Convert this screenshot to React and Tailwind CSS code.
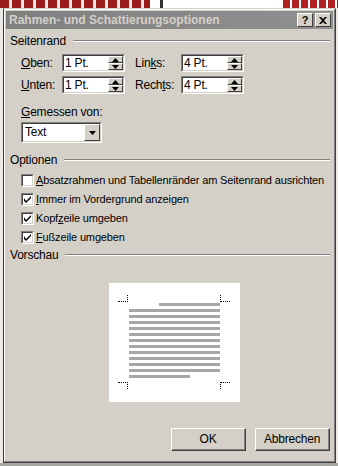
import React from "react";

const font = { fontFamily: '"Liberation Sans", Arial, sans-serif' };

function Spin() {
  return (
    <div className="flex flex-col w-[15px] h-full shrink-0">
      <div className="flex-1 flex items-center justify-center bg-[#d4d0c8] border-t border-l border-t-white border-l-white border-r border-b border-r-[#404040] border-b-[#404040]">
        <svg width="7" height="4" viewBox="0 0 7 4"><path d="M3.5 0 L7 4 L0 4 Z" fill="#000" /></svg>
      </div>
      <div className="flex-1 flex items-center justify-center bg-[#d4d0c8] border-t border-l border-t-white border-l-white border-r border-b border-r-[#404040] border-b-[#404040]">
        <svg width="7" height="4" viewBox="0 0 7 4"><path d="M0 0 L7 0 L3.5 4 Z" fill="#000" /></svg>
      </div>
    </div>
  );
}

function Field({ value }) {
  return (
    <div className="w-[63px] h-[18px] shrink-0 flex bg-white border-t border-l border-t-[#808080] border-l-[#808080] border-r border-b border-r-white border-b-white">
      <div className="flex-1 flex border-t border-l border-t-[#404040] border-l-[#404040] border-r border-b border-r-[#d4d0c8] border-b-[#d4d0c8]">
        <div className="flex-1 pl-[1px] text-[12px] leading-[15px] text-black">{value}</div>
        <Spin />
      </div>
    </div>
  );
}

function Check({ checked }) {
  return (
    <div className="w-[13px] h-[13px] shrink-0 bg-white border-t border-l border-t-[#808080] border-l-[#808080] border-r border-b border-r-white border-b-white">
      <div className="w-full h-full border-t border-l border-t-[#404040] border-l-[#404040] border-r border-b border-r-[#d4d0c8] border-b-[#d4d0c8] flex items-center justify-center">
        {checked && (
          <svg width="7" height="7" viewBox="0 0 7 7">
            <path d="M0 2 L0 5 L2 7 L7 2 L7 0 L2 5 Z" fill="#000" />
          </svg>
        )}
      </div>
    </div>
  );
}

function Group({ label }) {
  return (
    <div className="flex items-center h-[14px] pl-[4px] pr-[3px] gap-[7px]">
      <span className="text-[12px] tracking-[-0.2px] text-black whitespace-nowrap">{label}</span>
      <div className="flex-1 h-[2px] border-t border-t-[#808080] border-b border-b-white" />
    </div>
  );
}

function Btn({ children }) {
  return (
    <div className="w-[75px] h-[23px] bg-[#d4d0c8] border-t border-l border-t-white border-l-white border-r border-b border-r-[#404040] border-b-[#404040]">
      <div className="w-full h-full border-r border-b border-r-[#808080] border-b-[#808080] flex items-center justify-center text-[12px] text-black">
        {children}
      </div>
    </div>
  );
}

function Preview() {
  const lines = [];
  for (let i = 0; i < 13; i++) {
    let cls = "h-[3px] bg-[#a6a6a6]";
    if (i === 0) cls += " ml-[30px]";
    if (i === 12) cls += " mr-[30px]";
    lines.push(<div key={i} className={cls} />);
  }
  const corner = "absolute w-[10px] h-[7px] border-dotted border-[#000]";
  return (
    <div className="relative w-[131px] h-[119px] bg-white">
      <div className={corner + " left-[9px] top-[12px] border-r border-b"} />
      <div className={corner + " left-[111px] top-[12px] border-l border-b"} />
      <div className={corner + " left-[9px] top-[99px] border-r border-t"} />
      <div className={corner + " left-[111px] top-[99px] border-l border-t"} />
      <div className="absolute left-[20px] top-[20px] w-[91px] flex flex-col gap-[3px]">{lines}</div>
    </div>
  );
}

export default function App() {
  return (
    <div className="w-[338px] h-[466px] overflow-hidden bg-[#f2eeee] flex flex-col" style={font}>
      <div className="h-[8px] flex shrink-0">
        <div className="w-[150px] bg-[repeating-linear-gradient(90deg,#9b1c1c_0px,#9b1c1c_9px,#f5e6e6_9px,#f5e6e6_12px)]" />
        <div className="w-[10px] bg-white" />
        <div className="w-[3px] bg-[#333]" />
        <div className="w-[120px] bg-white" />
        <div className="flex-1 bg-[repeating-linear-gradient(90deg,#b02020_0px,#b02020_7px,#fff_7px,#fff_9px)]" />
      </div>
      <div className="flex h-[455px] shrink-0">
        <div className="w-[3px] bg-[#ece9e6]" />
        <div className="w-[333px] flex flex-col bg-[#d4d0c8] border-t border-l border-t-[#d4d0c8] border-l-[#3a3a3a] border-r border-b border-r-[#404040] border-b-[#404040]">
          <div className="flex flex-col flex-1 border-t border-l border-t-white border-l-white border-r border-b border-r-[#808080] border-b-[#808080] px-[1px] pt-[1px]">
            <div className="h-[18px] flex items-center bg-[linear-gradient(90deg,#808080,#909090)] pl-[3px] pr-[2px]">
              <span className="flex-1 text-[12px] font-bold text-[#d4d0c8] whitespace-nowrap">Rahmen- und Schattierungsoptionen</span>
              <div className="w-[16px] h-[14px] bg-[#d4d0c8] border-t border-l border-t-white border-l-white border-r border-b border-r-[#404040] border-b-[#404040] flex items-center justify-center text-[11px] font-bold leading-none text-black">?</div>
              <div className="w-[16px] h-[14px] ml-[2px] bg-[#d4d0c8] border-t border-l border-t-white border-l-white border-r border-b border-r-[#404040] border-b-[#404040] flex items-center justify-center">
                <svg width="8" height="7" viewBox="0 0 8 7"><path d="M0 0 L2 0 L4 2 L6 0 L8 0 L5 3.5 L8 7 L6 7 L4 5 L2 7 L0 7 L3 3.5 Z" fill="#000" /></svg>
              </div>
            </div>
            <div className="flex flex-col text-[12px] tracking-[-0.2px] text-black">
              <div className="h-[5px]" />
              <Group label="Seitenrand" />
              <div className="h-[6px]" />
              <div className="flex flex-col gap-[4px] pl-[15px]">
                <div className="flex items-center h-[18px]">
                  <span className="w-[41px] shrink-0"><u>O</u>ben:</span>
                  <Field value="1 Pt." />
                  <span className="w-[56px] shrink-0 pl-[10px]">Lin<u>k</u>s:</span>
                  <Field value="4 Pt." />
                </div>
                <div className="flex items-center h-[18px]">
                  <span className="w-[41px] shrink-0"><u>U</u>nten:</span>
                  <Field value="1 Pt." />
                  <span className="w-[56px] shrink-0 pl-[10px] whitespace-nowrap">Rech<u>t</u>s:</span>
                  <Field value="4 Pt." />
                </div>
              </div>
              <div className="h-[11px]" />
              <div className="pl-[15px] h-[14px] leading-[14px]"><u>G</u>emessen von:</div>
              <div className="h-[3px]" />
              <div className="pl-[15px]">
                <div className="w-[81px] h-[21px] flex bg-white border-t border-l border-t-[#808080] border-l-[#808080] border-r border-b border-r-white border-b-white">
                  <div className="flex-1 flex border-t border-l border-t-[#404040] border-l-[#404040] border-r border-b border-r-[#d4d0c8] border-b-[#d4d0c8]">
                    <div className="flex-1 pl-[2px] text-[12px] leading-[17px]">Text</div>
                    <div className="w-[16px] h-full bg-[#d4d0c8] border-t border-l border-t-white border-l-white border-r border-b border-r-[#404040] border-b-[#404040] flex items-center justify-center">
                      <svg width="7" height="4" viewBox="0 0 7 4"><path d="M0 0 L7 0 L3.5 4 Z" fill="#000" /></svg>
                    </div>
                  </div>
                </div>
              </div>
              <div className="h-[10px]" />
              <Group label="Optionen" />
              <div className="h-[4px]" />
              <div className="flex flex-col pl-[15px]">
                {[
                  [false, <><u>A</u>bsatzrahmen und Tabellenränder am Seitenrand ausrichten</>],
                  [true, <><u>I</u>mmer im Vordergrund anzeigen</>],
                  [true, <>Kopf<u>z</u>eile umgeben</>],
                  [true, <><u>F</u>ußzeile umgeben</>],
                ].map(([c, t], i) => (
                  <div key={i} className="h-[19px] flex items-center gap-[2px] whitespace-nowrap">
                    <Check checked={c} />
                    <span className="text-[11px] tracking-[-0.15px]">{t}</span>
                  </div>
                ))}
              </div>
              <div className="h-[1px]" />
              <Group label="Vorschau" />
              <div className="h-[21px]" />
              <div className="pl-[103px]">
                <Preview />
              </div>
              <div className="h-[26px]" />
              <div className="flex justify-end gap-[9px] pr-[3px]">
                <Btn>OK</Btn>
                <Btn>Abbrechen</Btn>
              </div>
            </div>
          </div>
        </div>
        <div className="flex-1 bg-[#ece9e6]" />
      </div>
      <div className="flex-1 bg-[#a8a6a2]" />
    </div>
  );
}
